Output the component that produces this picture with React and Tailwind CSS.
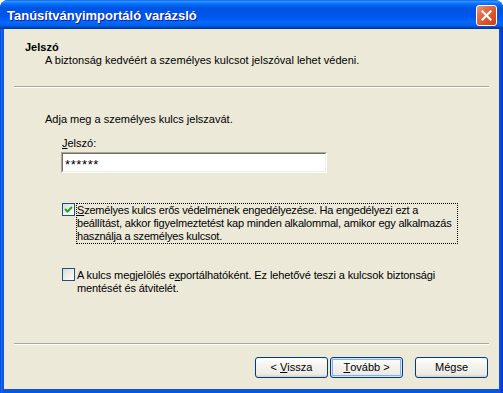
const Check = ({ checked }) => (
  <div className="w-[13px] h-[13px] shrink-0 border border-[#1C5180] bg-[linear-gradient(135deg,#DCDCD7_0%,#F2F1EC_60%,#FFFFFF_100%)] flex items-center justify-center">
    {checked && (
      <svg width="9" height="9" viewBox="0 0 9 9">
        <path d="M1 4 L3.5 6.5 L8 2" stroke="#21A121" strokeWidth="2" fill="none" />
      </svg>
    )}
  </div>
);

const Btn = ({ children, def, className = "" }) => (
  <div
    className={
      "w-[73px] h-[21px] rounded-[3px] border border-[#003C74] bg-[linear-gradient(to_bottom,#FFFFFF_0%,#F4F3EE_40%,#ECEBE6_85%,#D6D0C5_100%)] flex items-center justify-center text-[11px] leading-none text-black " +
      (def ? "shadow-[inset_0_0_0_1px_#CEE7FF,inset_0_0_0_2px_#89ADE4] " : "") +
      className
    }
  >
    {children}
  </div>
);

export default function App() {
  return (
    <div className="w-[503px] h-[393px] bg-white font-['Liberation_Sans',Arial,sans-serif] text-[11px] text-black">
      <div className="w-[503px] h-[393px] flex flex-col rounded-t-[8px] overflow-hidden bg-[#0A3FD6]">
        <div className="h-[29px] shrink-0 flex items-center pl-[7px] pr-[6px] bg-[linear-gradient(to_bottom,#0058EE_0%,#3593FF_4%,#288EFF_7%,#127DFF_10%,#036FFC_14%,#0262EE_20%,#0057E5_26%,#0054E3_32%,#0055EB_56%,#005BF5_66%,#026AFE_76%,#0062EF_86%,#0052D6_92%,#0040AB_96%,#003092_100%)]">
          <span className="text-white font-bold text-[13px] leading-none pt-[1px] [text-shadow:1px_1px_0_#0A1E8C]">
            Tanúsítványimportáló varázsló
          </span>
          <div className="ml-auto mt-[2px] w-[21px] h-[21px] rounded-[3px] border border-white bg-[linear-gradient(135deg,#EB9C7C_0%,#E4704A_30%,#D9522A_65%,#C8401A_100%)] flex items-center justify-center">
            <svg width="11" height="11" viewBox="0 0 11 11">
              <path d="M1.5 1.5 L9.5 9.5 M9.5 1.5 L1.5 9.5" stroke="white" strokeWidth="2.2" strokeLinecap="square" />
            </svg>
          </div>
        </div>
        <div className="flex-1 flex px-[4px] pb-[4px] bg-[linear-gradient(to_right,#0831D9_0px,#166AEE_1px,#0A55E5_3px,#0A55E5_499px,#0831D9_503px)]">
          <div className="flex-1 bg-[#ECE9D8] flex flex-col">
            <div className="pt-[12px] pl-[21px]">
              <div className="font-bold leading-[13px]">Jelszó</div>
              <div className="pl-[20px] leading-[13px]">
                A biztonság kedvéért a személyes kulcsot jelszóval lehet védeni.
              </div>
            </div>
            <div className="mt-[19px] mx-[10px] h-[2px] border-t border-t-[#ACA899] border-b border-b-white" />
            <div className="pl-[41px] pt-[25px]">
              <div className="leading-[13px]">Adja meg a személyes kulcs jelszavát.</div>
              <div className="pl-[17px] mt-[11px] leading-[13px]">
                <span className="underline">J</span>elszó:
              </div>
              <div className="ml-[16px] mt-[2px] w-[266px] h-[21px] border border-t-[#ACA899] border-l-[#ACA899] border-r-white border-b-white">
                <div className="w-full h-full border border-t-[#716F64] border-l-[#716F64] border-r-[#F1EFE2] border-b-[#F1EFE2] bg-white flex items-center pl-[2px] pt-[3px] leading-none text-[13px] tracking-[0.6px]">
                  ******
                </div>
              </div>
            </div>
            <div className="pl-[58px] mt-[30px] flex items-start">
              <Check checked />
              <div className="ml-[1px] w-[382px] border border-dotted border-black leading-[13px] whitespace-nowrap tracking-[-0.2px]">
                <div><span className="underline">S</span>zemélyes kulcs erős védelmének engedélyezése. Ha engedélyezi ezt a</div>
                <div>beállítást, akkor figyelmeztetést kap minden alkalommal, amikor egy alkalmazás</div>
                <div>használja a személyes kulcsot.</div>
              </div>
            </div>
            <div className="pl-[58px] mt-[24px] flex items-start">
              <Check />
              <div className="ml-[1px] w-[382px] border border-transparent leading-[13px] whitespace-nowrap tracking-[-0.1px]">
                <div>A kulcs megjelölés e<span className="underline">x</span>portálhatóként. Ez lehetővé teszi a kulcsok biztonsági</div>
                <div>mentését és átvitelét.</div>
              </div>
            </div>
            <div className="mt-auto mx-[10px] h-[2px] border-t border-t-[#ACA899] border-b border-b-white" />
            <div className="mt-[12px] mb-[11px] pr-[11px] flex justify-end">
              <Btn>&lt; <span className="underline ml-[3px]">V</span>issza</Btn>
              <Btn def className="ml-[2px]"><span className="underline">T</span>ovább &gt;</Btn>
              <Btn className="ml-[12px]">Mégse</Btn>
            </div>
          </div>
        </div>
      </div>
    </div>
  );
}
